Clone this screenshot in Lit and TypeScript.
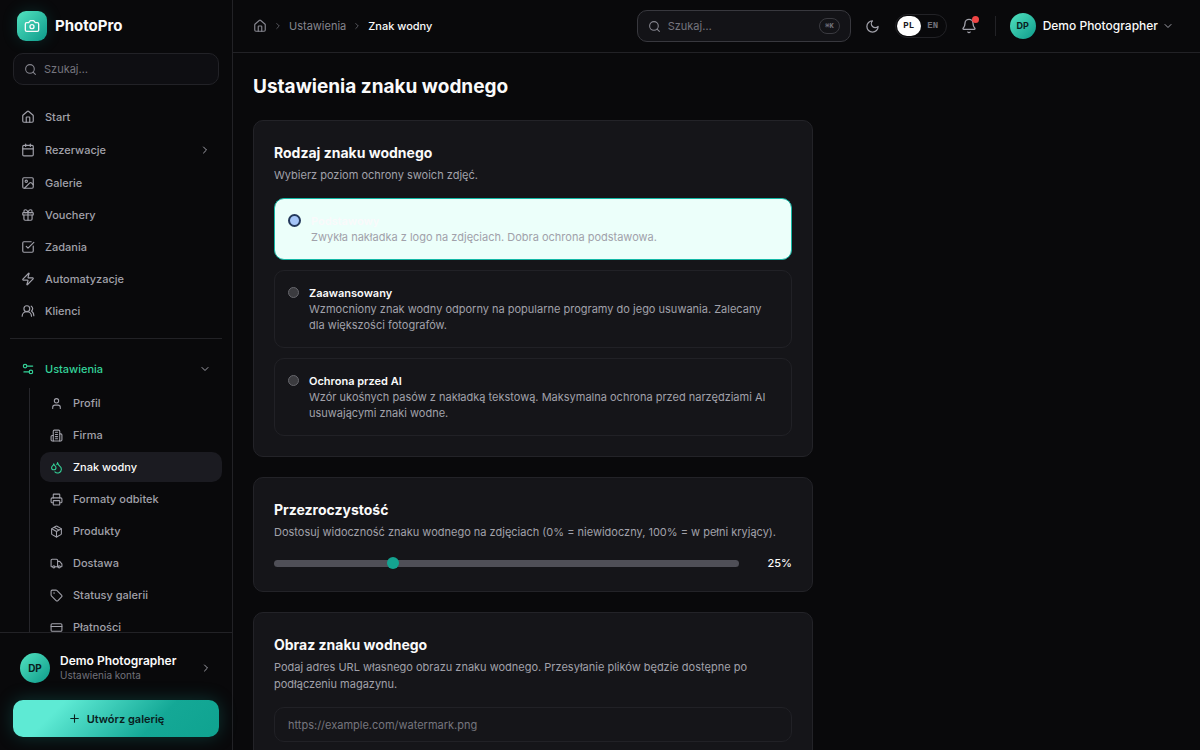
import { LitElement, html, svg, css } from "lit";
import type { SVGTemplateResult } from "lit";
import { customElement, property, state } from "lit/decorators.js";
import { classMap } from "lit/directives/class-map.js";

const ICONS: Record<string, SVGTemplateResult> = {
  camera: svg`<path d="M14.5 4h-5L7 7H4a2 2 0 0 0-2 2v9a2 2 0 0 0 2 2h16a2 2 0 0 0 2-2V9a2 2 0 0 0-2-2h-3l-2.5-3z"/><circle cx="12" cy="13" r="3"/>`,
  search: svg`<circle cx="11" cy="11" r="8"/><path d="m21 21-4.3-4.3"/>`,
  home: svg`<path d="M15 21v-8a1 1 0 0 0-1-1h-4a1 1 0 0 0-1 1v8"/><path d="M3 10a2 2 0 0 1 .709-1.528l7-5.999a2 2 0 0 1 2.582 0l7 5.999A2 2 0 0 1 21 10v9a2 2 0 0 1-2 2H5a2 2 0 0 1-2-2z"/>`,
  calendar: svg`<path d="M8 2v4"/><path d="M16 2v4"/><rect width="18" height="18" x="3" y="4" rx="2"/><path d="M3 10h18"/>`,
  image: svg`<rect width="18" height="18" x="3" y="3" rx="2"/><circle cx="9" cy="9" r="2"/><path d="m21 15-3.086-3.086a2 2 0 0 0-2.828 0L6 21"/>`,
  gift: svg`<rect x="3" y="8" width="18" height="4" rx="1"/><path d="M12 8v13"/><path d="M19 12v7a2 2 0 0 1-2 2H7a2 2 0 0 1-2-2v-7"/><path d="M7.5 8a2.5 2.5 0 0 1 0-5A4.8 8 0 0 1 12 8a4.8 8 0 0 1 4.5-5 2.5 2.5 0 0 1 0 5"/>`,
  check: svg`<path d="M21 10.5V19a2 2 0 0 1-2 2H5a2 2 0 0 1-2-2V5a2 2 0 0 1 2-2h12.5"/><path d="m9 11 3 3L22 4"/>`,
  zap: svg`<path d="M4 14a1 1 0 0 1-.78-1.63l9.9-10.2a.5.5 0 0 1 .86.46l-1.92 6.02A1 1 0 0 0 13 10h7a1 1 0 0 1 .78 1.63l-9.9 10.2a.5.5 0 0 1-.86-.46l1.92-6.02A1 1 0 0 0 11 14z"/>`,
  users: svg`<path d="M18 21a8 8 0 0 0-16 0"/><circle cx="10" cy="8" r="5"/><path d="M22 20c0-3.37-2-6.5-4-8a5 5 0 0 0-.45-8.3"/>`,
  settings: svg`<path d="M20 7h-9"/><path d="M14 17H5"/><circle cx="17" cy="17" r="3"/><circle cx="7" cy="7" r="3"/>`,
  user: svg`<path d="M19 21v-2a4 4 0 0 0-4-4H9a4 4 0 0 0-4 4v2"/><circle cx="12" cy="7" r="4"/>`,
  building: svg`<path d="M6 22V4a2 2 0 0 1 2-2h8a2 2 0 0 1 2 2v18Z"/><path d="M6 12H4a2 2 0 0 0-2 2v6a2 2 0 0 0 2 2h2"/><path d="M18 9h2a2 2 0 0 1 2 2v9a2 2 0 0 1-2 2h-2"/><path d="M10 6h4"/><path d="M10 10h4"/><path d="M10 14h4"/><path d="M10 18h4"/>`,
  droplets: svg`<path d="M7 16.3c2.2 0 4-1.83 4-4.05 0-1.16-.57-2.26-1.71-3.19S7.29 6.75 7 5.3c-.29 1.45-1.14 2.84-2.29 3.76S3 11.1 3 12.25c0 2.22 1.8 4.05 4 4.05z"/><path d="M12.56 6.6A10.97 10.97 0 0 0 14 3.02c.5 2.5 2 4.9 4 6.5s3 3.5 3 5.5a6.98 6.98 0 0 1-11.91 4.97"/>`,
  printer: svg`<path d="M6 18H4a2 2 0 0 1-2-2v-5a2 2 0 0 1 2-2h16a2 2 0 0 1 2 2v5a2 2 0 0 1-2 2h-2"/><path d="M6 9V3a1 1 0 0 1 1-1h10a1 1 0 0 1 1 1v6"/><rect x="6" y="14" width="12" height="8" rx="1"/>`,
  box: svg`<path d="M11 21.73a2 2 0 0 0 2 0l7-4A2 2 0 0 0 21 16V8a2 2 0 0 0-1-1.73l-7-4a2 2 0 0 0-2 0l-7 4A2 2 0 0 0 3 8v8a2 2 0 0 0 1 1.73z"/><path d="M12 22V12"/><path d="m3.3 7 8.7 5 8.7-5"/><path d="m7.5 4.27 9 5.15"/>`,
  truck: svg`<path d="M14 18V6a2 2 0 0 0-2-2H4a2 2 0 0 0-2 2v11a1 1 0 0 0 1 1h2"/><path d="M15 18H9"/><path d="M19 18h2a1 1 0 0 0 1-1v-3.65a1 1 0 0 0-.22-.624l-3.48-4.35A1 1 0 0 0 17.52 8H14"/><circle cx="17" cy="18" r="2"/><circle cx="7" cy="18" r="2"/>`,
  tag: svg`<path d="M12.586 2.586A2 2 0 0 0 11.172 2H4a2 2 0 0 0-2 2v7.172a2 2 0 0 0 .586 1.414l8.704 8.704a2.426 2.426 0 0 0 3.42 0l6.58-6.58a2.426 2.426 0 0 0 0-3.42z"/><circle cx="7.5" cy="7.5" r=".5"/>`,
  card: svg`<rect width="20" height="14" x="2" y="5" rx="2"/><path d="M2 10h20"/>`,
  moon: svg`<path d="M12 3a6 6 0 0 0 9 9 9 9 0 1 1-9-9Z"/>`,
  bell: svg`<path d="M10.268 21a2 2 0 0 0 3.464 0"/><path d="M3.262 15.326A1 1 0 0 0 4 17h16a1 1 0 0 0 .74-1.673C19.41 13.956 18 12.499 18 8A6 6 0 0 0 6 8c0 4.499-1.411 5.956-2.738 7.326"/>`,
  plus: svg`<path d="M5 12h14"/><path d="M12 5v14"/>`,
  right: svg`<path d="m9 18 6-6-6-6"/>`,
  down: svg`<path d="m6 9 6 6 6-6"/>`,
};

@customElement("app-icon")
export class AppIcon extends LitElement {
  @property() name = "";

  static styles = css`
    :host { display: inline-flex; flex: none; width: 14px; height: 14px; }
    svg { width: 100%; height: 100%; }
  `;

  render() {
    return html`<svg viewBox="0 0 24 24" fill="none" stroke="currentColor" stroke-width="2"
      stroke-linecap="round" stroke-linejoin="round" aria-hidden="true">${ICONS[this.name]}</svg>`;
  }
}

const NAV = [
  { icon: "home", label: "Start" },
  { icon: "calendar", label: "Rezerwacje", group: true },
  { icon: "image", label: "Galerie" },
  { icon: "gift", label: "Vouchery" },
  { icon: "check", label: "Zadania" },
  { icon: "zap", label: "Automatyzacje" },
  { icon: "users", label: "Klienci" },
];

const SETTINGS = [
  { icon: "user", label: "Profil" },
  { icon: "building", label: "Firma" },
  { icon: "droplets", label: "Znak wodny", active: true },
  { icon: "printer", label: "Formaty odbitek" },
  { icon: "box", label: "Produkty" },
  { icon: "truck", label: "Dostawa" },
  { icon: "tag", label: "Statusy galerii" },
  { icon: "card", label: "Płatności" },
];

const LEVELS = [
  { id: "basic", title: "Podstawowy", text: "Zwykła nakładka z logo na zdjęciach. Dobra ochrona podstawowa." },
  { id: "advanced", title: "Zaawansowany", text: "Wzmocniony znak wodny odporny na popularne programy do jego usuwania. Zalecany dla większości fotografów." },
  { id: "ai", title: "Ochrona przed AI", text: "Wzór ukośnych pasów z nakładką tekstową. Maksymalna ochrona przed narzędziami AI usuwającymi znaki wodne." },
];

@customElement("app-root")
export class AppRoot extends LitElement {
  @state() private level = "basic";
  @state() private opacity = 25;

  static styles = css`
    :host {
      display: grid;
      grid-template-columns: 233px minmax(0, 1fr);
      height: 100vh;
      overflow: hidden;
      background: #09090b;
      color: #fafafa;
      font: 500 11px/16px Inter, "Liberation Sans", sans-serif;
    }
    *, *::before { box-sizing: border-box; }
    a { color: inherit; text-decoration: none; }
    button { font: inherit; color: inherit; background: none; border: 0; padding: 0; cursor: pointer; }
    input { font: inherit; color: inherit; margin: 0; }
    h1, h2, p { margin: 0; }

    .sidebar {
      display: flex;
      flex-direction: column;
      min-height: 0;
      border-right: 1px solid #222226;
      background: #09090b;
    }
    .brand {
      display: flex;
      align-items: center;
      gap: 8px;
      padding: 11px 17px 12px;
      font-size: 15px;
      font-weight: 700;
    }
    .logo {
      display: grid;
      place-items: center;
      width: 30px;
      height: 30px;
      border-radius: 9px;
      background: linear-gradient(135deg, #52e3c0, #0d9a8a);
      box-shadow: 0 0 16px #14b8a62e;
    }
    .logo app-icon { width: 16px; height: 16px; }
    .search {
      display: flex;
      align-items: center;
      gap: 7px;
      height: 32px;
      padding: 0 10px;
      border: 1px solid #222227;
      border-radius: 10px;
      background: #0e0e12;
      color: #85858e;
    }
    .search input {
      flex: 1;
      min-width: 0;
      padding: 0;
      border: 0;
      outline: 0;
      background: none;
      color: #fafafa;
      font-weight: 400;
    }
    input::placeholder { color: #75757e; opacity: 1; }
    .sidebar .search { margin: 0 13px; }

    nav { color: #a1a1aa; }
    .menu {
      flex: 1;
      min-height: 0;
      overflow: hidden;
      padding: 17px 10px 0;
    }
    .list { display: flex; flex-direction: column; gap: 2px; }
    .item {
      display: flex;
      align-items: center;
      gap: 10px;
      width: 100%;
      height: 30px;
      padding: 0 11px;
      border-radius: 10px;
      text-align: left;
      flex: none;
    }
    .item.group { height: 32px; }
    .item .end { margin-left: auto; width: 12px; height: 12px; color: #a1a1aa; }
    .item.open { color: #34d399; }
    .rule { height: 1px; margin: 12px 0 14px; border: 0; background: #222226; }
    .tree {
      margin: 3px 0 0 19px;
      padding: 0 0 0 10px;
      border-left: 1px solid #26262b;
    }
    .tree .item { padding: 0 10px; }
    .tree app-icon { width: 13px; height: 13px; }
    .tree .item.active { background: #1b1b21; color: #fafafa; }
    .tree .item.active app-icon { color: #34d399; }

    .footer {
      display: flex;
      flex-direction: column;
      gap: 10px;
      padding: 13px;
      border-top: 1px solid #222226;
    }
    .account {
      display: flex;
      align-items: center;
      gap: 10px;
      height: 44px;
      padding: 0 7px;
      text-align: left;
    }
    .account .who { flex: 1; display: flex; flex-direction: column; line-height: 15px; }
    .account .end { width: 12px; height: 12px; color: #a1a1aa; }
    .name { font-size: 12px; font-weight: 600; }
    .sub { font-size: 10px; font-weight: 400; color: #71717a; }
    .avatar {
      display: grid;
      place-items: center;
      flex: none;
      width: 30px;
      height: 30px;
      border-radius: 50%;
      background: linear-gradient(135deg, #52e3c0, #0d9a8a);
      color: #09201d;
      font-size: 10px;
      font-weight: 700;
    }
    .create {
      display: flex;
      align-items: center;
      justify-content: center;
      gap: 6px;
      height: 37px;
      border-radius: 10px;
      background: linear-gradient(135deg, #5eead4 22%, #14a896 68%, #0fa390);
      box-shadow: 0 0 18px #14b8a640;
      color: #09201d;
      font-weight: 600;
    }
    .create app-icon { width: 13px; height: 13px; }

    .page { display: flex; flex-direction: column; min-width: 0; min-height: 0; }
    .topbar {
      display: flex;
      align-items: center;
      height: 53px;
      flex: none;
      padding: 0 26px 0 20px;
      border-bottom: 1px solid #222226;
    }
    .crumbs {
      display: flex;
      align-items: center;
      gap: 6px;
      margin-right: auto;
      color: #85858e;
      font-weight: 400;
    }
    .crumbs a { display: flex; }
    .crumbs .sep { width: 10px; height: 10px; color: #66666e; }
    .crumbs .here { color: #fafafa; font-weight: 500; }
    .topbar .search { width: 214px; background: #131317; border-color: #38383e; }
    .topbar .search app-icon, .sidebar .search app-icon { width: 13px; height: 13px; }
    kbd {
      padding: 0 5px;
      border: 1px solid #3a3a40;
      border-radius: 8px;
      color: #75757e;
      font: 700 7px/14px "Liberation Mono", "DejaVu Sans Mono", monospace;
    }
    .theme { display: flex; margin: 0 15px 0 14px; color: #a1a1aa; }
    .theme app-icon { width: 15px; height: 15px; }
    .lang {
      display: flex;
      align-items: center;
      height: 24px;
      padding: 1px;
      border: 1px solid #222226;
      border-radius: 12px;
      font: 700 9px/20px "Liberation Mono", monospace;
      color: #71717a;
    }
    .lang button { width: 24px; height: 20px; border-radius: 10px; }
    .lang .on { background: #fff; color: #18181b; }
    .bell { position: relative; display: flex; margin: 0 18px 0 14px; color: #a1a1aa; }
    .bell app-icon { width: 16px; height: 16px; }
    .bell::after {
      content: "";
      position: absolute;
      top: -2px;
      right: -2px;
      width: 7px;
      height: 7px;
      border-radius: 50%;
      background: #ef4444;
    }
    .split { width: 1px; height: 20px; background: #222226; }
    .me { display: flex; align-items: center; gap: 4px; margin-left: 14px; font-size: 12px; }
    .me .avatar { width: 26px; height: 26px; margin-right: 3px; font-size: 9px; }
    .me > app-icon { width: 12px; height: 12px; color: #a1a1aa; }

    main { flex: 1; min-height: 0; overflow: hidden; padding: 20px; }
    h1 { font-size: 19px; line-height: 27px; font-weight: 700; }
    .cards { display: flex; flex-direction: column; gap: 20px; max-width: 560px; margin-top: 20px; }
    .card {
      display: flex;
      flex-direction: column;
      padding: 20px;
      border: 1px solid #232328;
      border-radius: 10px;
      background: #151519;
    }
    h2 { font-size: 14px; line-height: 23px; font-weight: 700; }
    .hint { margin: 3px 0 14px; line-height: 17px; font-weight: 400; color: #a1a1aa; }
    .levels { display: flex; flex-direction: column; gap: 10px; }
    .level {
      display: flex;
      gap: 10px;
      padding: 14px 13px;
      border: 1px solid #212126;
      border-radius: 10px;
      cursor: pointer;
    }
    .level.on { border-color: #14b8a6; background: #ecfffa; }
    .level input {
      appearance: none;
      flex: none;
      width: 11px;
      height: 11px;
      margin-top: 2px;
      border: 1px solid #66666c;
      border-radius: 50%;
      background: #3b3b3f;
    }
    .level input:checked {
      width: 13px;
      height: 13px;
      margin-top: 1px;
      border: 2px solid #24395c;
      background: #a5c5f8;
    }
    .copy { display: flex; flex-direction: column; }
    .title { font-weight: 600; }
    .text { font-weight: 400; color: #a1a1aa; }

    .slider { display: flex; align-items: center; gap: 13px; }
    .slider output { width: 40px; text-align: right; }
    .slider input {
      appearance: none;
      flex: 1;
      min-width: 0;
      height: 7px;
      border-radius: 4px;
      background: #4f4f57;
    }
    .slider input::-webkit-slider-thumb {
      appearance: none;
      width: 12px;
      height: 12px;
      border-radius: 50%;
      background: #14a390;
    }
    .url {
      height: 35px;
      padding: 0 13px;
      border: 1px solid #212126;
      border-radius: 10px;
      background: #151519;
      font-weight: 400;
    }
  `;

  render() {
    return html`
      <aside class="sidebar">
        <a class="brand" href="#"><span class="logo"><app-icon name="camera"></app-icon></span>PhotoPro</a>
        <label class="search">
          <app-icon name="search"></app-icon>
          <input type="search" placeholder="Szukaj…" aria-label="Szukaj w menu" />
        </label>
        <nav class="menu">
          <div class="list">
            ${NAV.map((n) => n.group
              ? html`<button class="item group" aria-expanded="false"><app-icon name=${n.icon}></app-icon>${n.label}<app-icon class="end" name="right"></app-icon></button>`
              : html`<a class="item" href="#"><app-icon name=${n.icon}></app-icon>${n.label}</a>`)}
          </div>
          <hr class="rule" />
          <button class="item group open" aria-expanded="true"><app-icon name="settings"></app-icon>Ustawienia<app-icon class="end" name="down"></app-icon></button>
          <div class="list tree">
            ${SETTINGS.map((n) => html`
              <a class=${classMap({ item: true, active: !!n.active })} href="#"><app-icon name=${n.icon}></app-icon>${n.label}</a>`)}
          </div>
        </nav>
        <div class="footer">
          <button class="account">
            <span class="avatar">DP</span>
            <span class="who"><span class="name">Demo Photographer</span><span class="sub">Ustawienia konta</span></span>
            <app-icon class="end" name="right"></app-icon>
          </button>
          <button class="create"><app-icon name="plus"></app-icon>Utwórz galerię</button>
        </div>
      </aside>
      <div class="page">
        <header class="topbar">
          <nav class="crumbs" aria-label="Ścieżka">
            <a href="#" aria-label="Start"><app-icon name="home"></app-icon></a>
            <app-icon class="sep" name="right"></app-icon>
            <a href="#">Ustawienia</a>
            <app-icon class="sep" name="right"></app-icon>
            <span class="here" aria-current="page">Znak wodny</span>
          </nav>
          <label class="search">
            <app-icon name="search"></app-icon>
            <input type="search" placeholder="Szukaj…" aria-label="Szukaj" />
            <kbd>⌘K</kbd>
          </label>
          <button class="theme" aria-label="Motyw"><app-icon name="moon"></app-icon></button>
          <div class="lang"><button class="on">PL</button><button>EN</button></div>
          <button class="bell" aria-label="Powiadomienia"><app-icon name="bell"></app-icon></button>
          <span class="split"></span>
          <button class="me"><span class="avatar">DP</span>Demo Photographer<app-icon name="down"></app-icon></button>
        </header>
        <main>
          <h1>Ustawienia znaku wodnego</h1>
          <div class="cards">
            <section class="card">
              <h2>Rodzaj znaku wodnego</h2>
              <p class="hint">Wybierz poziom ochrony swoich zdjęć.</p>
              <div class="levels" role="radiogroup">
                ${LEVELS.map((l) => html`
                  <label class=${classMap({ level: true, on: this.level === l.id })}>
                    <input type="radio" name="level" .checked=${this.level === l.id} @change=${() => (this.level = l.id)} />
                    <span class="copy"><span class="title">${l.title}</span><span class="text">${l.text}</span></span>
                  </label>`)}
              </div>
            </section>
            <section class="card">
              <h2><label for="opacity">Przezroczystość</label></h2>
              <p class="hint">Dostosuj widoczność znaku wodnego na zdjęciach (0% = niewidoczny, 100% = w pełni kryjący).</p>
              <div class="slider">
                <input id="opacity" type="range" min="0" max="100" .value=${String(this.opacity)}
                  @input=${(e: Event) => (this.opacity = Number((e.target as HTMLInputElement).value))} />
                <output for="opacity">${this.opacity}%</output>
              </div>
            </section>
            <section class="card">
              <h2><label for="url">Obraz znaku wodnego</label></h2>
              <p class="hint">Podaj adres URL własnego obrazu znaku wodnego. Przesyłanie plików będzie dostępne po podłączeniu magazynu.</p>
              <input class="url" id="url" type="url" placeholder="https://example.com/watermark.png" />
            </section>
          </div>
        </main>
      </div>
    `;
  }
}
